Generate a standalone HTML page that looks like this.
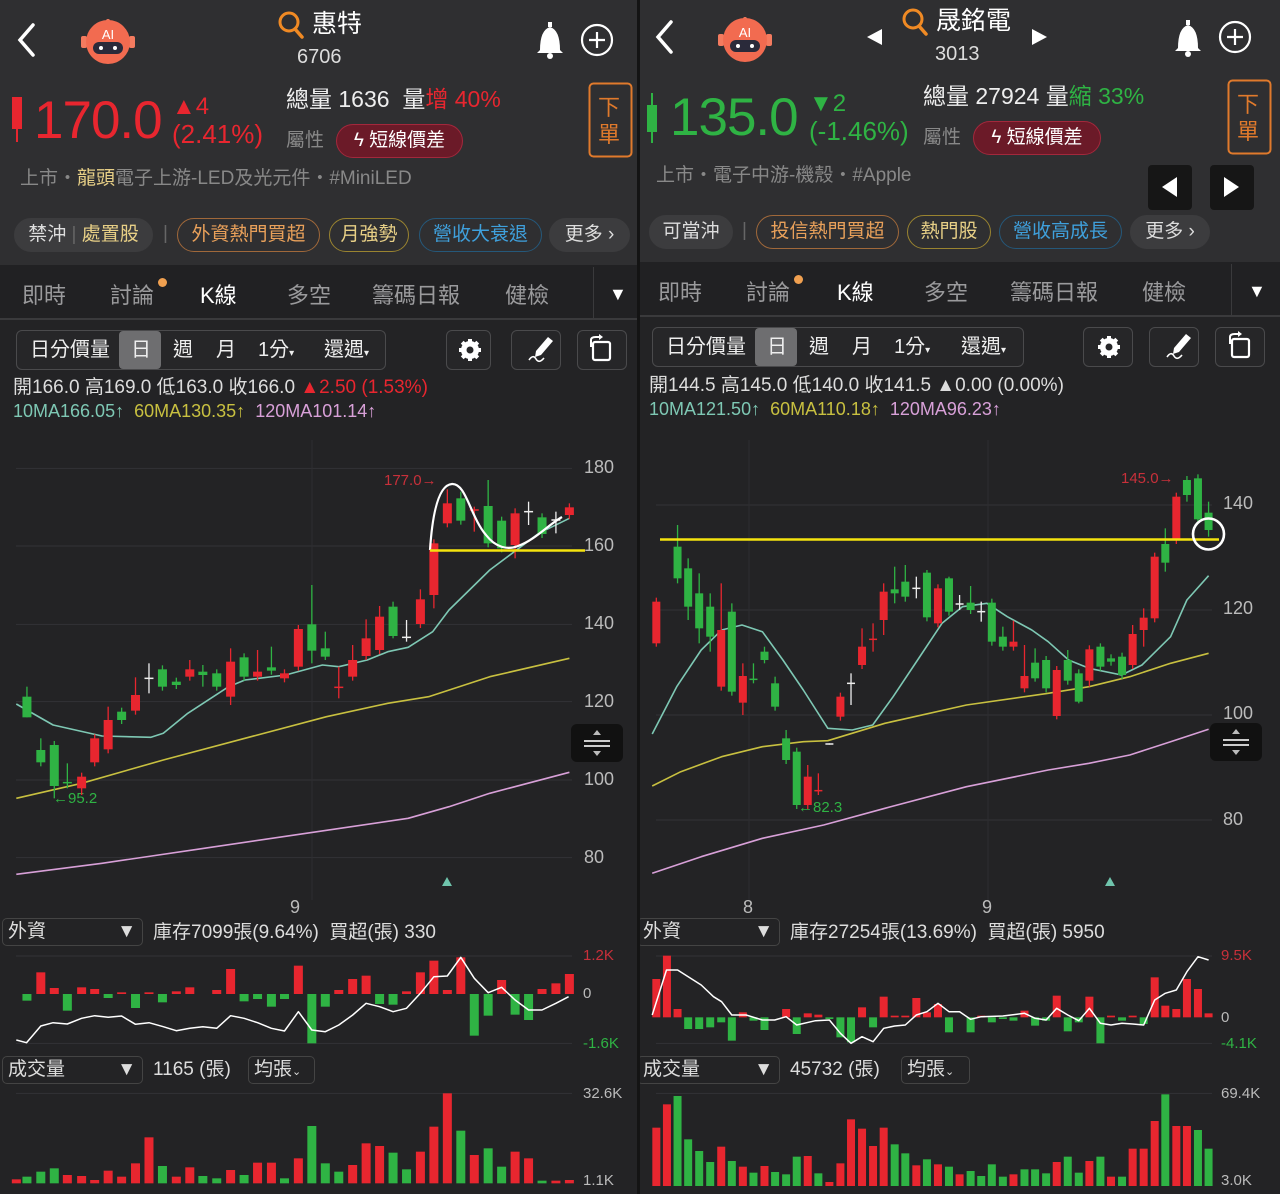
<!DOCTYPE html>
<html><head><meta charset="utf-8">
<style>
*{margin:0;padding:0;box-sizing:border-box}
body{width:1280px;height:1194px;background:#141414;font-family:"Liberation Sans","Noto Sans CJK TC",sans-serif;color:#ddd;overflow:hidden;position:relative}
.p{position:absolute;top:0;width:637px;height:1194px;background:#232325;overflow:hidden}
.hd{position:absolute;left:0;top:0;width:100%;height:265px;background:#2f2f31}
.tb{position:absolute;left:0;top:265px;width:100%;height:55px;background:#212123;border-bottom:2px solid #3a3a3c}
.a{position:absolute;white-space:nowrap;line-height:1}
.chip{position:absolute;height:34px;border-radius:17px;font-size:19px;line-height:32px;text-align:center;border:1.5px solid}
.tab{position:absolute;top:278px;font-size:22px;color:#9a9a9c}
.btn{position:absolute;border:1.5px solid #4a4a4c;border-radius:6px;background:#262628}
.dd{position:absolute;height:28px;border:1.5px solid #444;border-radius:5px;font-size:19px;line-height:26px;padding-left:5px;color:#ddd}
.lab{position:absolute;font-size:18px;color:#bbb}
svg{position:absolute;left:0;top:0}
</style></head><body>

<div class="p" id="L" style="left:0">
 <div class="hd"></div>
 <div class="tb"></div>
 <svg width="637" height="265">
  <path d="M33 25 L20 40 L33 55" stroke="#fff" stroke-width="3.5" fill="none" stroke-linecap="round"/>
  <g transform="translate(108,42)"><line x1="0" y1="-20" x2="0" y2="-14" stroke="#f47b5f" stroke-width="2"/><circle cx="0" cy="-21" r="2" fill="#f47b5f"/><rect x="-27" y="-6" width="6" height="12" rx="2" fill="#f47b5f"/><rect x="21" y="-6" width="6" height="12" rx="2" fill="#f47b5f"/><circle r="22" cx="0" cy="0" fill="#f26b50"/><rect x="-15" y="0" width="30" height="12" rx="6" fill="#2a2a3a"/><circle cx="-7" cy="6" r="2" fill="#fff"/><circle cx="7" cy="6" r="2" fill="#fff"/><text x="0" y="-3" font-size="13" fill="#fff" text-anchor="middle" font-family="Liberation Sans">AI</text></g>
  <circle cx="289" cy="22" r="9" stroke="#f08a24" stroke-width="3" fill="none"/><line x1="295" y1="29" x2="302" y2="37" stroke="#f08a24" stroke-width="3.5" stroke-linecap="round"/>
  <path d="M540 50 Q540 30 550 27 Q560 30 560 50 L563 53 L537 53 Z" fill="#fff"/><circle cx="550" cy="56" r="3" fill="#fff"/><rect x="548" y="22" width="4" height="5" fill="#fff"/>
  <circle cx="597" cy="40" r="15" stroke="#fff" stroke-width="2.2" fill="none"/><path d="M589 40H605M597 32V48" stroke="#fff" stroke-width="2.2"/>
  <rect x="12" y="97" width="10" height="32" fill="#e8262f"/><line x1="17" y1="129" x2="17" y2="142" stroke="#e8262f" stroke-width="2"/>
  <rect x="589.5" y="83.5" width="42" height="73" rx="4" fill="none" stroke="#e07a2c" stroke-width="2"/>
 </svg>
 <div class="a" style="left:312px;top:12px;font-size:25px;color:#fff">惠特</div>
 <div class="a" style="left:297px;top:47px;font-size:20px;color:#ddd">6706</div>
 <div class="a" style="left:34px;top:94px;font-size:53px;color:#e8262f;letter-spacing:-1px">170.0</div>
 <div class="a" style="left:172px;top:95px;font-size:24px;color:#e8262f">▲4</div>
 <div class="a" style="left:172px;top:121px;font-size:26px;color:#e8262f">(2.41%)</div>
 <div class="a" style="left:286px;top:88px;font-size:23px;color:#eee">總量 1636 &nbsp;量<span style="color:#e8262f">增 40%</span></div>
 <div class="a" style="left:286px;top:131px;font-size:19px;color:#888">屬性</div>
 <div class="chip" style="left:336px;top:124px;width:127px;background:#6b1a28;border-color:#a3283c;color:#fff">ϟ 短線價差</div>
 <div class="a" style="left:598px;top:94px;font-size:22px;color:#e07a2c;line-height:27px;width:24px">下<br>單</div>
 <div class="a" style="left:20px;top:169px;font-size:19px;color:#888">上市・<span style="color:#e7cf86">龍頭</span>電子上游-LED及光元件・#MiniLED</div>
 <div class="chip" style="left:14px;top:218px;width:139px;background:#3c3c3e;border-color:#3c3c3e;color:#ddd">禁沖 <span style="color:#666">|</span> <span style="color:#e7cf86">處置股</span></div>
 <div class="a" style="left:163px;top:224px;font-size:19px;color:#666">|</div>
 <div class="chip" style="left:177px;top:218px;width:143px;border-color:#a0683a;color:#e8a05a">外資熱門買超</div>
 <div class="chip" style="left:329px;top:218px;width:80px;border-color:#9a8430;color:#e7cf86">月強勢</div>
 <div class="chip" style="left:419px;top:218px;width:123px;border-color:#25587a;color:#3fa0dc">營收大衰退</div>
 <div class="chip" style="left:549px;top:218px;width:81px;background:#3c3c3e;border-color:#3c3c3e;color:#ddd">更多 ›</div>
 <div class="tab" style="left:22px">即時</div>
 <div class="tab" style="left:110px">討論</div><div class="a" style="left:158px;top:278px;width:9px;height:9px;border-radius:5px;background:#f0a050"></div>
 <div class="tab" style="left:200px;color:#fff">K線</div>
 <div class="tab" style="left:287px">多空</div>
 <div class="tab" style="left:372px">籌碼日報</div>
 <div class="tab" style="left:505px">健檢</div>
 <div class="a" style="left:593px;top:267px;width:1px;height:52px;background:#3a3a3c"></div>
 <div class="a" style="left:609px;top:285px;font-size:18px;color:#fff">▼</div>
 <div class="btn" style="left:16px;top:330px;width:370px;height:40px"></div>
 <div class="a" style="left:119px;top:331px;width:42px;height:38px;background:#6e6e70;border-radius:4px"></div>
 <div class="a" style="left:30px;top:340px;font-size:20px;color:#eee">日分價量</div>
 <div class="a" style="left:131px;top:340px;font-size:20px;color:#eee">日</div>
 <div class="a" style="left:173px;top:340px;font-size:20px;color:#eee">週</div>
 <div class="a" style="left:216px;top:340px;font-size:20px;color:#eee">月</div>
 <div class="a" style="left:258px;top:340px;font-size:20px;color:#eee">1分<span style="font-size:10px">▾</span></div>
 <div class="a" style="left:324px;top:340px;font-size:20px;color:#eee">還週<span style="font-size:10px">▾</span></div>
 <div class="btn" style="left:446px;top:330px;width:45px;height:40px"></div>
 <div class="btn" style="left:511px;top:330px;width:50px;height:40px"></div>
 <div class="btn" style="left:577px;top:330px;width:50px;height:40px"></div>
 <div class="a" style="left:13px;top:378px;font-size:19px;color:#ddd">開166.0 高169.0 低163.0 收166.0 <span style="color:#e8262f">▲2.50 (1.53%)</span></div>
 <div class="a" style="left:13px;top:402px;font-size:18px"><span style="color:#7ec8b4">10MA166.05↑</span> &nbsp;<span style="color:#c8c040">60MA130.35↑</span> &nbsp;<span style="color:#d8a0d8">120MA101.14↑</span></div>
 <div class="lab" style="left:584px;top:457px">180</div><div class="lab" style="left:584px;top:535px">160</div><div class="lab" style="left:584px;top:613px">140</div><div class="lab" style="left:584px;top:691px">120</div><div class="lab" style="left:584px;top:769px">100</div><div class="lab" style="left:584px;top:847px">80</div>
 <div class="lab" style="left:290px;top:897px">9</div>
 <div class="a" style="left:384px;top:473px;font-size:15px;color:#c8303a">177.0→</div>
 <div class="a" style="left:53px;top:791px;font-size:15px;color:#2fb344">←95.2</div>
 <div class="a" style="left:571px;top:724px;width:52px;height:38px;background:#111;border-radius:6px"></div>
 <div class="dd" style="left:2px;top:918px;width:141px">外資<span style="position:absolute;right:6px">▼</span></div>
 <div class="a" style="left:153px;top:923px;font-size:19px;color:#ddd">庫存7099張(9.64%) &nbsp;買超(張) 330</div>
 <div class="a" style="left:583px;top:948px;font-size:15px;color:#c8303a">1.2K</div>
 <div class="a" style="left:583px;top:986px;font-size:15px;color:#bbb">0</div>
 <div class="a" style="left:583px;top:1036px;font-size:15px;color:#2fb344">-1.6K</div>
 <div class="dd" style="left:2px;top:1056px;width:141px">成交量<span style="position:absolute;right:6px">▼</span></div>
 <div class="a" style="left:153px;top:1060px;font-size:19px;color:#ddd">1165 (張)</div>
 <div class="dd" style="left:248px;top:1056px;width:67px">均張<span style="font-size:11px">⌄</span></div>
 <div class="a" style="left:583px;top:1086px;font-size:15px;color:#bbb">32.6K</div>
 <div class="a" style="left:583px;top:1173px;font-size:15px;color:#bbb">1.1K</div>
 <svg id="LS" width="637" height="1194"></svg>
</div>

<div class="p" id="R" style="left:640px;width:640px">
 <div class="hd"></div>
 <div class="tb" style="top:262px"></div>
 <svg width="640" height="265">
  <path d="M31 22 L18 37 L31 52" stroke="#fff" stroke-width="3.5" fill="none" stroke-linecap="round"/>
  <g transform="translate(105,40)"><line x1="0" y1="-20" x2="0" y2="-14" stroke="#f47b5f" stroke-width="2"/><circle cx="0" cy="-21" r="2" fill="#f47b5f"/><rect x="-27" y="-6" width="6" height="12" rx="2" fill="#f47b5f"/><rect x="21" y="-6" width="6" height="12" rx="2" fill="#f47b5f"/><circle r="22" cx="0" cy="0" fill="#f26b50"/><rect x="-15" y="0" width="30" height="12" rx="6" fill="#2a2a3a"/><circle cx="-7" cy="6" r="2" fill="#fff"/><circle cx="7" cy="6" r="2" fill="#fff"/><text x="0" y="-3" font-size="13" fill="#fff" text-anchor="middle" font-family="Liberation Sans">AI</text></g>
  <path d="M242 29 L227 37 L242 45Z" fill="#fff"/><path d="M392 29 L407 37 L392 45Z" fill="#fff"/>
  <circle cx="273" cy="19" r="9" stroke="#f08a24" stroke-width="3" fill="none"/><line x1="279" y1="26" x2="286" y2="34" stroke="#f08a24" stroke-width="3.5" stroke-linecap="round"/>
  <path d="M538 48 Q538 28 548 25 Q558 28 558 48 L561 51 L535 51 Z" fill="#fff"/><circle cx="548" cy="54" r="3" fill="#fff"/><rect x="546" y="20" width="4" height="5" fill="#fff"/>
  <circle cx="595" cy="37" r="15" stroke="#fff" stroke-width="2.2" fill="none"/><path d="M587 37H603M595 29V45" stroke="#fff" stroke-width="2.2"/>
  <rect x="7" y="105" width="10" height="27" fill="#2fb344"/><line x1="12" y1="93" x2="12" y2="143" stroke="#2fb344" stroke-width="2"/>
  <rect x="588.5" y="80.5" width="42" height="73" rx="4" fill="none" stroke="#e07a2c" stroke-width="2"/>
  <rect x="508" y="165" width="44" height="45" rx="4" fill="#161616"/><path d="M537 177 L522 187 L537 197Z" fill="#fff"/>
  <rect x="570" y="165" width="44" height="45" rx="4" fill="#161616"/><path d="M584 177 L599 187 L584 197Z" fill="#fff"/>
 </svg>
 <div class="a" style="left:296px;top:9px;font-size:25px;color:#fff">晟銘電</div>
 <div class="a" style="left:295px;top:44px;font-size:20px;color:#ddd">3013</div>
 <div class="a" style="left:30px;top:91px;font-size:53px;color:#2fb344;letter-spacing:-1px">135.0</div>
 <div class="a" style="left:169px;top:92px;font-size:24px;color:#2fb344">▼2</div>
 <div class="a" style="left:169px;top:118px;font-size:26px;color:#2fb344">(-1.46%)</div>
 <div class="a" style="left:283px;top:85px;font-size:23px;color:#eee">總量 27924 量<span style="color:#2fb344">縮 33%</span></div>
 <div class="a" style="left:283px;top:128px;font-size:19px;color:#888">屬性</div>
 <div class="chip" style="left:333px;top:121px;width:128px;background:#6b1a28;border-color:#a3283c;color:#fff">ϟ 短線價差</div>
 <div class="a" style="left:597px;top:91px;font-size:22px;color:#e07a2c;line-height:27px;width:24px">下<br>單</div>
 <div class="a" style="left:16px;top:166px;font-size:19px;color:#888">上市・電子中游-機殼・#Apple</div>
 <div class="chip" style="left:9px;top:215px;width:84px;background:#3c3c3e;border-color:#3c3c3e;color:#ddd">可當沖</div>
 <div class="a" style="left:102px;top:221px;font-size:19px;color:#666">|</div>
 <div class="chip" style="left:116px;top:215px;width:143px;border-color:#a0683a;color:#e8a05a">投信熱門買超</div>
 <div class="chip" style="left:267px;top:215px;width:84px;border-color:#9a8430;color:#e7cf86">熱門股</div>
 <div class="chip" style="left:359px;top:215px;width:123px;border-color:#25587a;color:#3fa0dc">營收高成長</div>
 <div class="chip" style="left:490px;top:215px;width:80px;background:#3c3c3e;border-color:#3c3c3e;color:#ddd">更多 ›</div>
 <div class="tab" style="left:18px;top:275px">即時</div>
 <div class="tab" style="left:106px;top:275px">討論</div><div class="a" style="left:154px;top:275px;width:9px;height:9px;border-radius:5px;background:#f0a050"></div>
 <div class="tab" style="left:197px;top:275px;color:#fff">K線</div>
 <div class="tab" style="left:284px;top:275px">多空</div>
 <div class="tab" style="left:370px;top:275px">籌碼日報</div>
 <div class="tab" style="left:502px;top:275px">健檢</div>
 <div class="a" style="left:591px;top:264px;width:1px;height:52px;background:#3a3a3c"></div>
 <div class="a" style="left:608px;top:282px;font-size:18px;color:#fff">▼</div>
 <div class="btn" style="left:12px;top:327px;width:372px;height:40px"></div>
 <div class="a" style="left:115px;top:328px;width:42px;height:38px;background:#6e6e70;border-radius:4px"></div>
 <div class="a" style="left:26px;top:337px;font-size:20px;color:#eee">日分價量</div>
 <div class="a" style="left:127px;top:337px;font-size:20px;color:#eee">日</div>
 <div class="a" style="left:169px;top:337px;font-size:20px;color:#eee">週</div>
 <div class="a" style="left:212px;top:337px;font-size:20px;color:#eee">月</div>
 <div class="a" style="left:254px;top:337px;font-size:20px;color:#eee">1分<span style="font-size:10px">▾</span></div>
 <div class="a" style="left:321px;top:337px;font-size:20px;color:#eee">還週<span style="font-size:10px">▾</span></div>
 <div class="btn" style="left:443px;top:327px;width:50px;height:40px"></div>
 <div class="btn" style="left:509px;top:327px;width:50px;height:40px"></div>
 <div class="btn" style="left:575px;top:327px;width:50px;height:40px"></div>
 <div class="a" style="left:9px;top:376px;font-size:19px;color:#ddd">開144.5 高145.0 低140.0 收141.5 ▲0.00 (0.00%)</div>
 <div class="a" style="left:9px;top:400px;font-size:18px"><span style="color:#7ec8b4">10MA121.50↑</span> &nbsp;<span style="color:#c8c040">60MA110.18↑</span> &nbsp;<span style="color:#d8a0d8">120MA96.23↑</span></div>
 <div class="lab" style="left:583px;top:493px">140</div><div class="lab" style="left:583px;top:598px">120</div><div class="lab" style="left:583px;top:703px">100</div><div class="lab" style="left:583px;top:809px">80</div>
 <div class="lab" style="left:103px;top:897px">8</div><div class="lab" style="left:342px;top:897px">9</div>
 <div class="a" style="left:481px;top:471px;font-size:15px;color:#c8303a">145.0→</div>
 <div class="a" style="left:158px;top:800px;font-size:15px;color:#2fb344">←82.3</div>
 <div class="a" style="left:570px;top:723px;width:52px;height:38px;background:#111;border-radius:6px"></div>
 <div class="dd" style="left:-3px;top:918px;width:143px">外資<span style="position:absolute;right:6px">▼</span></div>
 <div class="a" style="left:150px;top:923px;font-size:19px;color:#ddd">庫存27254張(13.69%) &nbsp;買超(張) 5950</div>
 <div class="a" style="left:581px;top:948px;font-size:15px;color:#c8303a">9.5K</div>
 <div class="a" style="left:581px;top:1010px;font-size:15px;color:#bbb">0</div>
 <div class="a" style="left:581px;top:1036px;font-size:15px;color:#2fb344">-4.1K</div>
 <div class="dd" style="left:-3px;top:1056px;width:143px">成交量<span style="position:absolute;right:6px">▼</span></div>
 <div class="a" style="left:150px;top:1060px;font-size:19px;color:#ddd">45732 (張)</div>
 <div class="dd" style="left:261px;top:1056px;width:69px">均張<span style="font-size:11px">⌄</span></div>
 <div class="a" style="left:581px;top:1086px;font-size:15px;color:#bbb">69.4K</div>
 <div class="a" style="left:581px;top:1173px;font-size:15px;color:#bbb">3.0K</div>
 <svg id="RS" width="640" height="1194"></svg>
</div>

<script>
var C={r:'#e8262f',g:'#2fb344',w:'#eeeeee'};
function X(z){return z/2.45}
function draw(id,cfg){
 var s='',Y0=430,Y1=900,bw=cfg.bw;
 function Y(z){return Y0+z/3}
 cfg.grid.forEach(function(g){s+='<line x1="16" x2="572" y1="'+Y(g)+'" y2="'+Y(g)+'" stroke="#333336" stroke-width="1"/>'});
 cfg.vg.forEach(function(v){s+='<line x1="'+v+'" x2="'+v+'" y1="440" y2="900" stroke="#2e2e31"/>'});
 s+=cfg.icons;
 function line(pts,col,w,yo){var d='';pts.forEach(function(p,i){d+=(i?'L':'M')+X(p[0]).toFixed(1)+' '+(yo+p[1]/3).toFixed(1)});return '<path d="'+d+'" stroke="'+col+'" stroke-width="'+w+'" fill="none" stroke-linejoin="round"/>'}
 s+=line(cfg.ma3,'#d8a0d8',1.6,Y0);s+=line(cfg.ma2,'#c8c040',1.6,Y0);s+=line(cfg.ma1,'#7ec8b4',1.6,Y0);
 cfg.c.forEach(function(c){var x=X(c[0]),t=Y(c[1]),b=Y(c[2]),col=C[c[3]],wt=Y(c[4]!=null?c[4]:c[1]-12),wb=Y(c[5]!=null?c[5]:c[2]+12);
  s+='<line x1="'+x+'" x2="'+x+'" y1="'+wt+'" y2="'+wb+'" stroke="'+col+'" stroke-width="1.3"/>';
  if(c[3]=='w'||b-t<1.5)s+='<line x1="'+(x-bw/2)+'" x2="'+(x+bw/2)+'" y1="'+t+'" y2="'+t+'" stroke="'+col+'" stroke-width="1.5"/>';
  else s+='<rect x="'+(x-bw/2)+'" y="'+t+'" width="'+bw+'" height="'+(b-t)+'" fill="'+col+'"/>';});
 s+=cfg.extra;
 s+='<line x1="16" x2="572" y1="'+(Y1+168/3)+'" y2="'+(Y1+168/3)+'" stroke="#333336"/><line x1="16" x2="572" y1="'+(Y1+430/3)+'" y2="'+(Y1+430/3)+'" stroke="#333336"/>';
 s+='<line x1="16" x2="572" y1="'+(Y1+580/3)+'" y2="'+(Y1+580/3)+'" stroke="#333336"/>';
 var z=cfg.zero;
 cfg.ch.forEach(function(c){var x=X(c[0]),v=c[1];if(!v)return;var col=v>0?C.r:C.g;var y=v>0?Y1+(z-v)/3:Y1+z/3;s+='<rect x="'+(x-bw/2)+'" y="'+y+'" width="'+bw+'" height="'+Math.abs(v)/3+'" fill="'+col+'"/>'});
 s+=line(cfg.chl,'#ffffff',1.5,Y1);
 cfg.vol.forEach(function(c){var x=X(c[0]),h=c[1]/3;s+='<rect x="'+(x-bw/2)+'" y="'+(Y1+cfg.vb/3-h)+'" width="'+bw+'" height="'+h+'" fill="'+C[c[2]]+'"/>'});
 document.getElementById(id).innerHTML=s;
}
function icons(gx,gy,px,rx){
 return '<g transform="translate('+gx+','+gy+')" fill="#fff"><circle r="9"/><g stroke="#fff" stroke-width="4">'+
 [0,45,90,135].map(function(a){return '<line x1="0" y1="-11" x2="0" y2="11" transform="rotate('+a+')"/>'}).join('')+'</g><circle r="3.5" fill="#262628"/></g>'+
 '<path d="M'+(px+12)+' '+(gy-13)+' l5 4 l-12 14 l-6 2 l1 -6 z" fill="#fff"/><path d="M'+(px-7)+' '+(gy+10)+' q4 -6 7 -1 q3 5 8 -1" stroke="#fff" stroke-width="1.6" fill="none"/>'+
 '<rect x="'+(rx-8)+'" y="'+(gy-8)+'" width="17" height="18" rx="2" stroke="#fff" stroke-width="2.2" fill="none"/><path d="M'+(rx-10)+' '+(gy-3)+' v-7 q0 -3 5 -3 h4" stroke="#fff" stroke-width="2" fill="none"/><path d="M'+(rx-2)+' '+(gy-16)+' l4 3 l-4 3z" fill="#fff"/>';
}
function scaleIcon(x,y){return '<path d="M'+(x-4)+' '+(y-8)+' l4 -5 l4 5z M'+(x-4)+' '+(y+8)+' l4 5 l4 -5z" fill="#bbb"/><rect x="'+(x-13)+'" y="'+(y-3)+'" width="26" height="2" fill="#ccc"/><rect x="'+(x-13)+'" y="'+(y+2)+'" width="26" height="2" fill="#ccc"/>'}

draw('LS',{bw:9,grid:[115,348,583,815,1050,1283],vg:[312],
 icons:icons(470,350,536,601),
 ma1:[[40,822],[130,885],[250,918],[370,922],[400,910],[460,850],[560,770],[600,750],[700,735],[790,705],[830,710],[900,690],[950,665],[1000,652],[1060,605],[1100,540],[1200,420],[1260,365],[1320,310],[1395,265]],
 ma2:[[40,1105],[200,1060],[400,990],[600,925],[800,860],[950,820],[1050,800],[1200,740],[1395,685]],
 ma3:[[40,1333],[250,1300],[500,1255],[750,1210],[1000,1165],[1100,1130],[1200,1090],[1395,1027]],
 c:[[66,800,862,'g',770,862],[100,960,997,'g',925],[133,945,1068,'g',null,1105],[165,1058,1062,'g',1000,1075],[200,1040,1075,'r',1028,1095],[232,925,997,'r'],[265,870,958,'r',830],[298,845,870,'g'],[332,795,842,'r',742],[365,745,745,'w',700,790],[398,718,770,'g'],[432,755,765,'g'],[465,718,740,'r',690],[497,725,735,'g',705,770],[531,730,770,'g'],[565,695,800,'r',655,825],[598,682,740,'g'],[631,725,740,'r',660],[665,712,722,'g',650],[697,730,745,'r'],[731,597,710,'r',585],[764,583,662,'g',465,700],[797,655,680,'g',605,690],[830,772,772,'r',710,805],[864,690,740,'r',645],[897,625,678,'r',568],[930,560,660,'r',528],[963,530,618,'g',515,625],[996,622,622,'w',570,635],[1030,508,582,'r',478],[1063,340,495,'r',null,535],[1096,220,280,'r',178],[1129,205,272,'g',185],[1162,240,240,'r',230,305],[1196,228,340,'g',150],[1229,272,355,'g'],[1262,250,345,'r',235,385],[1295,245,245,'w',215,285],[1328,262,312,'g'],[1362,270,270,'w',245,310],[1395,232,255,'r']],
 extra:'<path d="M430 550 C432 520 437 485 452 484 C466 483 470 516 486 535 C496 548 508 550 518 546 C535 540 548 525 562 517" stroke="#fff" stroke-width="2.2" fill="none"/><line x1="430" y1="550.5" x2="585" y2="550.5" stroke="#f5e30e" stroke-width="2.6"/><path d="M447 877 l-5 9 h10z" fill="#6fc4ac"/>'+scaleIcon(597,743),
 zero:282,
 ch:[[66,-20],[100,65],[133,18],[165,-50],[200,20],[232,15],[265,-12],[298,5],[332,-42],[365,5],[398,-25],[432,8],[465,20],[531,12],[565,75],[598,-22],[631,-15],[665,-38],[697,-15],[731,85],[764,-148],[797,-38],[830,12],[864,45],[897,55],[930,-30],[963,-32],[996,8],[1030,65],[1063,100],[1096,12],[1129,110],[1162,-125],[1196,-65],[1229,42],[1262,-62],[1295,-78],[1328,15],[1362,32],[1395,60]],
 chl:[[40,420],[65,428],[100,378],[130,368],[165,372],[200,355],[232,347],[265,352],[298,348],[332,373],[365,368],[400,380],[432,392],[465,385],[497,380],[531,385],[565,347],[598,355],[631,368],[665,385],[697,393],[731,335],[764,390],[797,395],[830,375],[864,345],[897,310],[930,320],[963,335],[996,325],[1030,280],[1063,230],[1096,228],[1129,172],[1162,235],[1196,278],[1229,262],[1262,300],[1295,330],[1328,330],[1362,310],[1393,290]],
 vb:850,
 vol:[[40,12,'r'],[66,20,'g'],[100,35,'g'],[133,45,'g'],[165,25,'r'],[200,22,'r'],[232,10,'r'],[265,38,'r'],[298,20,'r'],[332,60,'r'],[365,138,'r'],[398,52,'g'],[432,20,'r'],[465,48,'r'],[497,22,'g'],[531,15,'g'],[565,40,'r'],[598,25,'g'],[631,62,'r'],[665,62,'r'],[697,15,'g'],[731,75,'r'],[764,172,'g'],[797,60,'g'],[830,35,'g'],[864,55,'r'],[897,120,'r'],[930,112,'r'],[963,92,'g'],[996,42,'g'],[1030,95,'r'],[1063,170,'r'],[1096,270,'r'],[1129,158,'g'],[1162,85,'r'],[1196,105,'g'],[1229,50,'g'],[1262,95,'r'],[1295,75,'r'],[1328,8,'g'],[1362,8,'r'],[1395,10,'r']]
});

draw('RS',{bw:8,grid:[225,540,855,1170],vg:[109,348],
 icons:icons(469,347,534,600),
 ma1:[[30,912],[90,770],[150,660],[200,600],[250,585],[300,605],[350,690],[400,780],[460,895],[520,900],[570,885],[620,800],[680,690],[740,580],[790,530],[850,520],[900,560],[960,600],[1000,635],[1050,690],[1100,715],[1180,735],[1230,705],[1300,620],[1340,510],[1393,437]],
 ma2:[[30,1068],[100,1025],[200,980],[300,950],[400,935],[460,932],[600,880],[800,825],[1000,790],[1100,770],[1200,740],[1300,700],[1393,670]],
 ma3:[[30,1330],[150,1280],[300,1225],[450,1185],[600,1135],[800,1070],[1000,1020],[1100,1000],[1200,975],[1300,935],[1393,898]],
 c:[[40,515,640,'r',null,650],[92,350,445,'g',285,460],[118,415,530,'g',385,570],[145,490,595,'g',430,640],[172,530,620,'g',490,665],[199,600,770,'r',460],[225,545,785,'g',520],[252,738,818,'r',700,855],[278,748,748,'g',700,760],[305,665,690,'g',650,700],[331,760,830,'g',740],[358,925,990,'g',900],[384,965,1125,'g'],[411,1040,1125,'r',1005],[437,1082,1082,'r',1030,1095],[464,942,942,'w',940,944],[491,800,860,'r'],[517,760,760,'w',730,825],[544,650,705,'r',595],[571,628,628,'r',580,665],[597,485,570,'r',460,615],[624,478,490,'g',410,520],[650,455,500,'g',405,515],[677,475,475,'w',440,505],[703,428,562,'g',420],[730,475,580,'r'],[757,445,545,'g',440],[783,522,522,'w',495,540],[810,518,540,'g',468],[836,545,545,'w',515,575],[862,518,635,'g'],[889,620,650,'g',590],[915,635,650,'r',572],[942,738,775,'r',645],[968,698,745,'g',655,755],[995,690,775,'g'],[1021,720,858,'r',null,868],[1048,690,752,'g',660],[1075,730,815,'g',null,820],[1101,658,752,'r',null,770],[1128,650,710,'g',640],[1154,685,695,'g'],[1181,680,735,'g'],[1207,612,705,'r',585],[1234,563,600,'r',535,650],[1261,380,565,'r'],[1287,342,398,'g',295,425],[1314,200,330,'r'],[1340,150,195,'g',null,215],[1367,145,268,'g'],[1393,248,300,'g',215,320]],
 extra:'<line x1="20" y1="539.5" x2="579" y2="539.5" stroke="#f5e30e" stroke-width="2.6"/><circle cx="568.5" cy="534" r="15.5" stroke="#fff" stroke-width="2.6" fill="none"/><path d="M470 877 l-5 9 h10z" fill="#6fc4ac"/>'+scaleIcon(596,742),
 zero:352,
 ch:[[40,115],[66,185],[92,25],[118,-35],[145,-35],[172,-30],[199,-15],[225,-70],[252,15],[278,-10],[305,-38],[358,25],[384,-50],[411,12],[437,8],[464,-5],[491,-60],[517,-75],[544,30],[571,-30],[597,62],[624,5],[650,5],[677,58],[703,15],[730,40],[757,-45],[810,-45],[836,5],[862,-15],[889,-5],[915,-10],[942,20],[968,-25],[995,-10],[1021,65],[1048,-42],[1075,-15],[1101,62],[1128,-78],[1154,5],[1181,-10],[1207,5],[1234,-20],[1261,120],[1287,35],[1314,25],[1340,115],[1367,85],[1393,12]],
 chl:[[30,345],[65,210],[92,210],[150,255],[180,290],[200,305],[225,345],[260,345],[300,360],[330,360],[358,350],[384,375],[430,362],[464,360],[491,400],[517,430],[544,410],[571,425],[597,385],[624,378],[650,375],[677,345],[703,335],[730,310],[757,335],[783,335],[810,358],[836,350],[889,348],[942,340],[968,355],[995,360],[1021,325],[1048,345],[1075,362],[1101,325],[1128,370],[1154,375],[1181,370],[1207,372],[1234,375],[1261,300],[1287,280],[1314,270],[1340,215],[1367,170],[1393,180]],
 vb:858,
 vol:[[40,175,'r'],[66,245,'r'],[92,270,'g'],[118,140,'g'],[145,105,'g'],[172,72,'g'],[199,118,'r'],[225,75,'g'],[252,58,'r'],[278,40,'g'],[305,60,'r'],[331,42,'g'],[358,35,'g'],[384,88,'g'],[411,90,'r'],[437,38,'g'],[464,12,'r'],[491,68,'r'],[517,200,'r'],[544,172,'r'],[571,120,'r'],[597,175,'r'],[624,125,'g'],[650,98,'g'],[677,62,'r'],[703,80,'g'],[730,65,'r'],[757,58,'g'],[783,35,'r'],[810,45,'g'],[836,30,'g'],[862,65,'g'],[889,28,'g'],[915,35,'r'],[942,50,'g'],[968,50,'g'],[995,38,'g'],[1021,72,'r'],[1048,88,'g'],[1075,40,'g'],[1101,75,'r'],[1128,88,'g'],[1154,28,'r'],[1181,28,'g'],[1207,112,'r'],[1234,112,'r'],[1261,195,'r'],[1287,275,'g'],[1314,180,'r'],[1340,180,'r'],[1367,168,'g'],[1393,112,'g']]
});
</script>
</body></html>
